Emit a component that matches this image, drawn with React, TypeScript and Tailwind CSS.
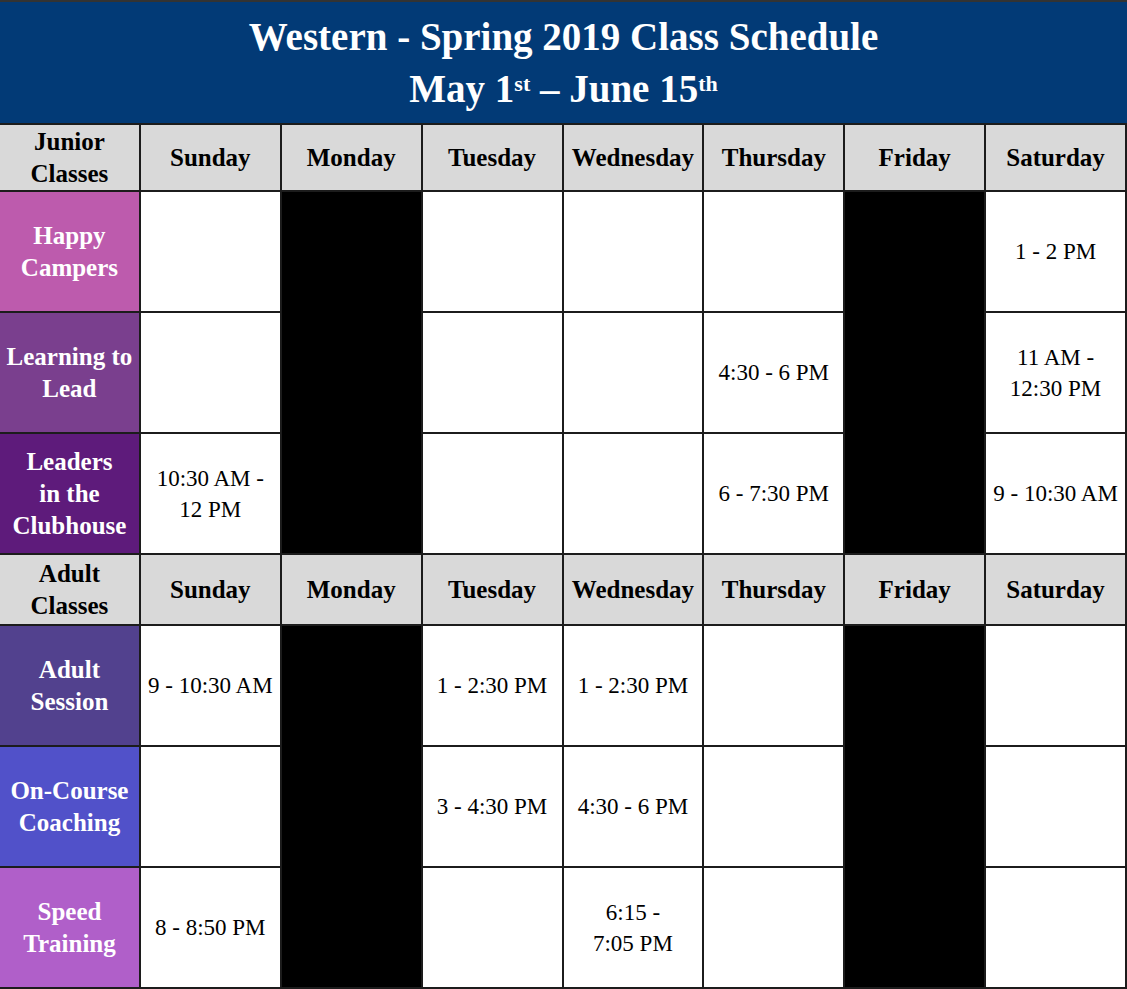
import React from 'react';

type Cell = string | null | 'X';

interface ClassRow {
  name: string[];
  color: string;
  cells: Cell[];
}

const days = ['Sunday', 'Monday', 'Tuesday', 'Wednesday', 'Thursday', 'Friday', 'Saturday'];

const juniorRows: ClassRow[] = [
  { name: ['Happy', 'Campers'], color: 'bg-[#bd5bad]', cells: [null, 'X', null, null, null, 'X', '1 - 2 PM'] },
  { name: ['Learning to', 'Lead'], color: 'bg-[#7a3f8e]', cells: [null, 'X', null, null, '4:30 - 6 PM', 'X', '11 AM -\n12:30 PM'] },
  { name: ['Leaders', 'in the', 'Clubhouse'], color: 'bg-[#5e1b7b]', cells: ['10:30 AM -\n12 PM', 'X', null, null, '6 - 7:30 PM', 'X', '9 - 10:30 AM'] },
];

const adultRows: ClassRow[] = [
  { name: ['Adult', 'Session'], color: 'bg-[#52418e]', cells: ['9 - 10:30 AM', 'X', '1 - 2:30 PM', '1 - 2:30 PM', null, 'X', null] },
  { name: ['On-Course', 'Coaching'], color: 'bg-[#5151c9]', cells: [null, 'X', '3 - 4:30 PM', '4:30 - 6 PM', null, 'X', null] },
  { name: ['Speed', 'Training'], color: 'bg-[#b05fc9]', cells: ['8 - 8:50 PM', 'X', null, '6:15 -\n7:05 PM', null, 'X', null] },
];

const HeaderRow: React.FC<{ label: string[] }> = ({ label }) => (
  <>
    <div className="bg-[#d9d9d9] flex flex-col items-center justify-center text-[25px] leading-[32px] font-bold text-black">
      {label.map(l => <span key={l}>{l}</span>)}
    </div>
    {days.map(d => (
      <div key={d} className="bg-[#d9d9d9] flex items-center justify-center text-[25px] font-bold text-black">
        {d}
      </div>
    ))}
  </>
);

const Block: React.FC<{ rows: ClassRow[] }> = ({ rows }) => (
  <>
    {rows.map((row, ri) => (
      <React.Fragment key={row.name.join(' ')}>
        <div className={`${row.color} flex flex-col items-center justify-center text-white font-bold text-[25px] leading-[32px] whitespace-nowrap`}>
          {row.name.map(n => <span key={n}>{n}</span>)}
        </div>
        {row.cells.map((c, ci) => {
          if (c === 'X') {
            return ri === 0 ? <div key={ci} className="bg-black row-span-3" /> : null;
          }
          return (
            <div key={ci} className="bg-white flex items-center justify-center text-center text-[23px] leading-[31px] text-black whitespace-pre-line">
              {c}
            </div>
          );
        })}
      </React.Fragment>
    ))}
  </>
);

export default function App() {
  return (
    <div className="w-[1127px] h-[989px] bg-[#1c1c1c] font-['Liberation_Serif',serif] overflow-hidden">
      <div className="h-[123px] bg-[#023a76] border-t-2 border-[#333] flex flex-col items-center justify-center text-white font-bold">
        <div className="text-[39px] leading-[52px]">Western - Spring 2019 Class Schedule</div>
        <div className="text-[39px] leading-[52px]">
          May 1<sup className="text-[22px]">st</sup> – June 15<sup className="text-[22px]">th</sup>
        </div>
      </div>
      <div className="pt-[2px] pr-[2px]">
        <div className="grid grid-cols-8 gap-[2px] grid-rows-[65px_119px_119px_119px]">
          <HeaderRow label={['Junior', 'Classes']} />
          <Block rows={juniorRows} />
        </div>
        <div className="grid grid-cols-8 gap-[2px] mt-[2px] grid-rows-[69px_119px_119px_119px]">
          <HeaderRow label={['Adult', 'Classes']} />
          <Block rows={adultRows} />
        </div>
      </div>
    </div>
  );
}
